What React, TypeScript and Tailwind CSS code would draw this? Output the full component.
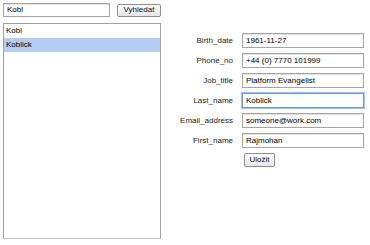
import React from "react";

const font = { fontFamily: '"Liberation Sans", Arial, sans-serif' };

function Field({ label, value, focused }: { label: string; value: string; focused?: boolean }) {
  return (
    <>
      <div className="flex h-[15px] items-center justify-end text-[8px] text-[#222]">{label}</div>
      <div
        className={
          focused
            ? "flex h-[15px] items-center border border-[#6f9ad6] px-[3px] text-[8px] text-black shadow-[0_0_0_1px_#9fc0ee]"
            : "flex h-[15px] items-center border border-[#a5a5a5] px-[3px] text-[8px] text-black shadow-[inset_0_1px_0_#e2e2e2]"
        }
      >
        {value}
      </div>
    </>
  );
}

export default function App() {
  return (
    <div className="h-[245px] w-[370px] bg-white" style={font}>
      <div className="flex items-center pl-[3px] pt-[3px]">
        <div className="flex h-[14px] w-[107px] items-center border border-[#a5a5a5] px-[3px] text-[8px] text-black shadow-[inset_0_1px_0_#e2e2e2]">
          Kobl
        </div>
        <div className="ml-[7px] flex h-[13px] w-[44px] items-center justify-center rounded-[2px] border border-[#8e8e8e] bg-gradient-to-b from-white to-[#e6e6e6] text-[8px] text-[#111]">
          Vyhledat
        </div>
      </div>
      <div className="mt-[6px] flex pl-[3px]">
        <div className="h-[216px] w-[158px] border border-[#a0a0a0] border-b-[#c8c8c8]">
          <div className="flex h-[14px] items-center px-[2px] text-[8px] text-black">Kobl</div>
          <div className="flex h-[14px] items-center bg-[#b4cef3] px-[2px] text-[8px] text-black">Koblick</div>
        </div>
        <div className="pt-[10px]">
          <div className="grid grid-cols-[72px_122px] gap-x-[9px] gap-y-[5px]">
            <Field label="Birth_date" value="1961-11-27" />
            <Field label="Phone_no" value="+44 (0) 7770 101999" />
            <Field label="Job_title" value="Platform Evangelist" />
            <Field label="Last_name" value="Koblick" focused />
            <Field label="Email_address" value="someone@work.com" />
            <Field label="First_name" value="Rajmohan" />
            <div />
            <div className="pl-[2px]">
              <div className="flex h-[14px] w-[31px] items-center justify-center rounded-[2px] border border-[#8e8e8e] bg-gradient-to-b from-white to-[#e6e6e6] text-[8px] text-[#111]">
                Uložit
              </div>
            </div>
          </div>
        </div>
      </div>
    </div>
  );
}
